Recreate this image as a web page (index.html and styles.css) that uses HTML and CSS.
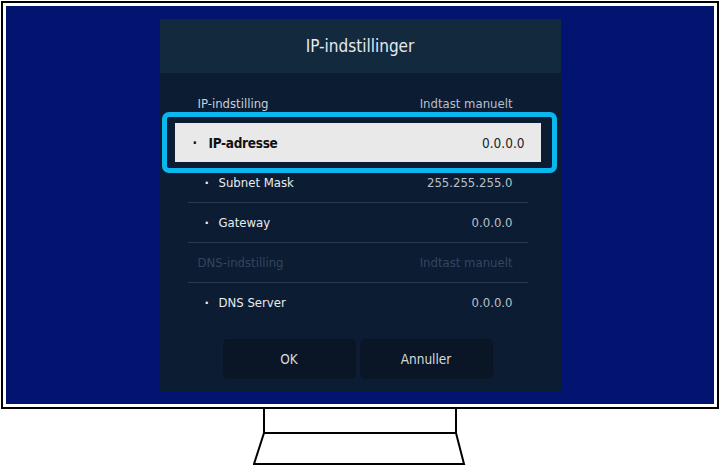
FILE: index.html
```html
<!DOCTYPE html>
<html lang="en">
<head>
    <meta charset="UTF-8">
    <meta name="viewport" content="width=device-width, initial-scale=1.0">
    <title>IP-indstillinger</title>
    <link rel="stylesheet" href="styles.css">
</head>
<body>
    <div class="monitor">
        <div class="screen">
            <div class="dialog">
                <div class="dialog-title">IP-indstillinger</div>
                <div class="dialog-body">
                    <div class="row group">
                        <span class="label">IP-indstilling</span>
                        <span class="value">Indtast manuelt</span>
                    </div>
                    <div class="row focused">
                        <span class="bullet">&middot;</span>
                        <span class="label">IP-adresse</span>
                        <span class="value">0.0.0.0</span>
                    </div>
                    <div class="row item lined">
                        <span class="bullet">&middot;</span>
                        <span class="label">Subnet Mask</span>
                        <span class="value">255.255.255.0</span>
                    </div>
                    <div class="row item lined">
                        <span class="bullet">&middot;</span>
                        <span class="label">Gateway</span>
                        <span class="value">0.0.0.0</span>
                    </div>
                    <div class="row group disabled lined">
                        <span class="label">DNS-indstilling</span>
                        <span class="value">Indtast manuelt</span>
                    </div>
                    <div class="row item last">
                        <span class="bullet">&middot;</span>
                        <span class="label">DNS Server</span>
                        <span class="value">0.0.0.0</span>
                    </div>
                    <div class="buttons">
                        <button class="btn">OK</button>
                        <button class="btn">Annuller</button>
                    </div>
                </div>
            </div>
        </div>
    </div>

    <!-- monitor stand: neck and base -->
    <div class="stand">
        <svg width="216" height="56" viewBox="0 0 216 56">
            <polyline points="11,0 11,24 203,24 203,0" fill="none" stroke="#000" stroke-width="2"/>
            <polygon points="11,24 203,24 211,55 1,55" fill="none" stroke="#000" stroke-width="2"/>
        </svg>
    </div>
</body>
</html>
```

FILE: styles.css
```css
body {
    margin: 0;
    padding: 1px 1px 0 1px;
    width: 720px;
    height: 465px;
    box-sizing: border-box;
    background: #fff;
    font-family: "DejaVu Sans Condensed", "Roboto", sans-serif;
    overflow: hidden;
}

/* TV frame */
.monitor {
    width: 718px;
    height: 408px;
    box-sizing: border-box;
    border: 2px solid #000;
    padding: 3px;
    background: #fff;
}
.screen {
    height: 100%;
    background: #021470;
    display: flex;
    justify-content: center;
    padding-top: 13px;
    box-sizing: border-box;
}

/* settings dialog */
.dialog {
    width: 401px;
    height: 373px;
    background: #0b1c33;
    display: flex;
    flex-direction: column;
}
.dialog-title {
    height: 54px;
    background: #13293e;
    color: #e6eaee;
    font-size: 17px;
    display: flex;
    align-items: center;
    justify-content: center;
}
.dialog-body {
    padding-top: 10px;
    display: flex;
    flex-direction: column;
}

.row {
    height: 40px;
    display: flex;
    align-items: center;
    margin: 0 33px 0 28px;
    font-size: 13px;
    box-sizing: border-box;
}
.row .value {
    margin-left: auto;
    color: #b8c0ca;
}
.row.lined {
    border-bottom: 1px solid #26394f;
}
.row.last {
    height: 38px;
}
.group {
    padding: 0 15px 0 10px;
    color: #c8ced6;
}
.item {
    padding: 0 15px 0 17px;
    color: #e8ecf0;
}
.bullet {
    width: 14px;
    font-weight: bold;
}
.disabled,
.disabled .value {
    color: #33465c;
}

/* focused row with the cyan selection ring */
.row.focused {
    position: relative;
    margin: 0 20px 1px 15px;
    height: 39px;
    padding: 0 16px 0 18px;
    background: #e9e9e9;
    color: #111;
    font-size: 13.5px;
    font-weight: bold;
    letter-spacing: -0.3px;
}
.row.focused .bullet {
    width: 16px;
}
.row.focused::before {
    content: "";
    position: absolute;
    top: -11px;
    bottom: -11px;
    left: -13px;
    right: -16px;
    border: 5px solid #0bb7ee;
    border-radius: 7px;
}
.row.focused .value {
    color: #222;
    font-weight: normal;
    letter-spacing: 0;
}

.buttons {
    display: flex;
    gap: 4px;
    margin-top: 18px;
    padding-left: 63px;
}
.btn {
    width: 133px;
    height: 40px;
    border: none;
    border-radius: 5px;
    background: #0a1626;
    color: #d6dade;
    font-family: inherit;
    font-size: 13.5px;
}

.stand {
    display: flex;
    justify-content: center;
    padding-left: 1px;
}
```
